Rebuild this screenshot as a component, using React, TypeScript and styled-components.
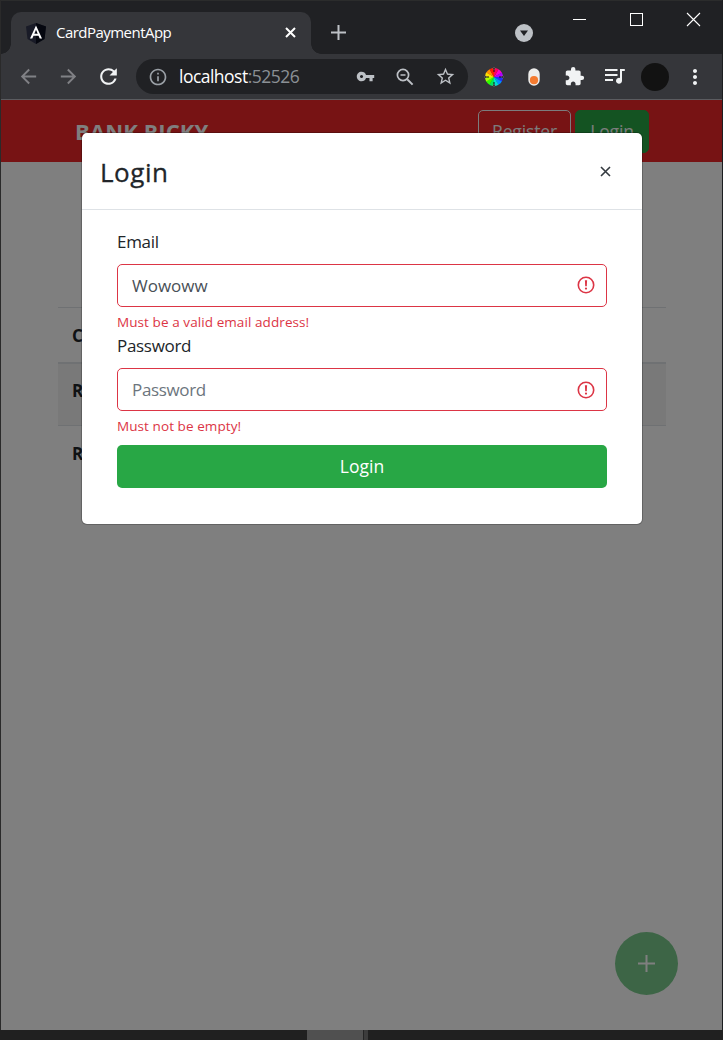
import React from "react";
import styled, { createGlobalStyle, css } from "styled-components";
import {
  MdArrowBack,
  MdArrowForward,
  MdRefresh,
  MdInfoOutline,
  MdVpnKey,
  MdStarBorder,
  MdExtension,
  MdMoreVert,
} from "react-icons/md";

const Global = createGlobalStyle`
  *, *::before, *::after { box-sizing: border-box; }
  body {
    margin: 0;
    background: #1c1c1c;
    color: #212529;
    font-family: "Open Sans", "Noto Sans", sans-serif;
    overflow: hidden;
  }
`;

const Desktop = styled.div`
  width: 723px;
  height: 1040px;
  display: flex;
  flex-direction: column;
  background: linear-gradient(90deg, #2a2a2a 0 50%, #1c1e20 50%);
`;

const Window = styled.div`
  width: 721px;
  height: 1030px;
  margin-left: 1px;
  display: flex;
  flex-direction: column;
`;

const Taskbar = styled.div`
  height: 10px;
  padding-left: 307px;
  display: flex;
  background: #202020;
`;

const TaskbarItem = styled.div<{ $width: number; $color: string }>`
  width: ${(p) => p.$width}px;
  background: ${(p) => p.$color};
`;

/* Browser chrome */

const TabStrip = styled.div`
  height: 54px;
  display: flex;
  align-items: flex-start;
  background: #202124;
  border-top: 1px solid #2b2c2c;
`;

const flare = css`
  content: "";
  position: absolute;
  bottom: 0;
  width: 10px;
  height: 10px;
`;

const Tab = styled.div`
  position: relative;
  width: 300px;
  height: 42px;
  margin: 11px 0 0 10px;
  padding: 0 15px;
  display: flex;
  align-items: center;
  background: #35363a;
  border-radius: 10px 10px 0 0;
  color: #fff;
  font-size: 15px;

  &::before {
    ${flare}
    left: -10px;
    background: radial-gradient(circle at 0 0, transparent 9.5px, #35363a 10px);
  }
  &::after {
    ${flare}
    right: -10px;
    background: radial-gradient(circle at 100% 0, transparent 9.5px, #35363a 10px);
  }
`;

const TabTitle = styled.span`
  flex: 1;
  margin-left: 10px;
  padding-bottom: 2px;
  letter-spacing: -0.53px;
`;

const TabClose = styled.div`
  display: flex;
  padding-bottom: 1px;
`;

const NewTab = styled.div`
  margin: 24px 0 0 20px;
  display: flex;
`;

const WindowControls = styled.div`
  margin-left: auto;
  display: flex;
`;

const TabSearch = styled.div`
  margin: 23px 18px 0 0;
`;

const Control = styled.div<{ $width?: number }>`
  width: ${(p) => p.$width ?? 57}px;
  height: 37px;
  display: flex;
  align-items: center;
  justify-content: center;
`;

const Toolbar = styled.div`
  height: 46px;
  padding: 0 6px 0 7px;
  display: flex;
  align-items: center;
  background: #35363a;
  border-bottom: 1px solid #5b5c60;
`;

const ToolButton = styled.div<{ $color?: string; $width?: number }>`
  width: ${(p) => p.$width ?? 40}px;
  height: 40px;
  display: flex;
  align-items: center;
  justify-content: center;
  color: ${(p) => p.$color ?? "#f1f3f4"};
`;

const AddressBar = styled.div`
  width: 332px;
  height: 35px;
  margin: 0 6px 0 8px;
  padding: 0 3px 0 12px;
  display: flex;
  align-items: center;
  border-radius: 18px;
  background: #202124;
  color: #9aa0a6;
`;

const Url = styled.span`
  flex: 1;
  margin-left: 11px;
  padding-bottom: 1px;
  color: #8b9095;
  font-size: 17.5px;
  letter-spacing: -0.52px;

  b {
    color: #fff;
    font-weight: 400;
  }
`;

const Avatar = styled.div`
  width: 28px;
  height: 28px;
  border-radius: 50%;
  background: #121212;
`;

/* Web page */

const Viewport = styled.div`
  position: relative;
  height: 930px;
  background: #fff;
  overflow: hidden;
`;

const NavBar = styled.header`
  height: 62px;
  padding: 0 73px 0 74px;
  display: flex;
  align-items: center;
  gap: 4px;
  background: #ee2628;
`;

const Brand = styled.div`
  flex: 1;
  color: #fff;
  font-size: 22px;
  font-weight: 700;
  letter-spacing: 0.1px;
`;

const NavButton = styled.div<{ $solid?: boolean }>`
  height: 43px;
  width: ${(p) => (p.$solid ? 74 : 93)}px;
  display: flex;
  align-items: center;
  justify-content: center;
  border: 1px solid ${(p) => (p.$solid ? "#28a745" : "#f8f9fa")};
  border-radius: 5px;
  background: ${(p) => (p.$solid ? "#28a745" : "transparent")};
  color: #f8f9fa;
  font-size: 17.5px;
  letter-spacing: -0.15px;
`;

const CardTable = styled.div`
  width: 608px;
  margin: 145px 0 0 57px;
  font-size: 17px;
  font-weight: 700;
  line-height: 27px;
`;

const TableRow = styled.div<{ $head?: boolean; $striped?: boolean }>`
  height: ${(p) => (p.$head ? 57 : p.$striped ? 61 : 62)}px;
  padding: ${(p) => (p.$striped ? 13 : 14)}px 14px;
  border-top: ${(p) => (p.$striped ? 0 : 1)}px solid #dee2e6;
  border-bottom: ${(p) => (p.$head ? 2 : 0)}px solid #dee2e6;
  background: ${(p) => (p.$striped ? "#f2f2f2" : "transparent")};
`;

const AddButton = styled.div`
  position: absolute;
  right: 44px;
  bottom: 35px;
  width: 63px;
  height: 63px;
  display: flex;
  align-items: center;
  justify-content: center;
  border-radius: 50%;
  background: #7acb8c;
`;

const Backdrop = styled.div`
  position: absolute;
  inset: 0;
  padding: 33px 0 0 81px;
  background: rgba(0, 0, 0, 0.5);
`;

const Modal = styled.section`
  width: 560px;
  height: 391px;
  border-radius: 5px;
  background: #fff;
  box-shadow: 0 0 0 1px rgba(0, 0, 0, 0.22);
`;

const ModalHeader = styled.div`
  height: 77px;
  padding: 0 31px 0 18px;
  display: flex;
  align-items: center;
  justify-content: space-between;
  border-bottom: 1px solid #dee2e6;
`;

const ModalTitle = styled.h4`
  margin: 2px 0 0;
  font-size: 26px;
  font-weight: 500;
  line-height: 36px;
  letter-spacing: 0.55px;
  -webkit-text-stroke: 0.3px #212529;
`;

const Form = styled.div`
  padding: 18px 35px 0;
  display: flex;
  flex-direction: column;
`;

const Label = styled.label`
  height: 27px;
  margin-bottom: 9px;
  font-size: 17px;
  line-height: 27px;
  letter-spacing: -0.3px;
`;

const Field = styled.div<{ $placeholder?: boolean }>`
  height: 43px;
  padding: 0 11px 1px 14px;
  display: flex;
  align-items: center;
  justify-content: space-between;
  border: 1px solid #dc3545;
  border-radius: 5px;
  color: ${(p) => (p.$placeholder ? "#6c757d" : "#495057")};
  font-size: 17px;
  letter-spacing: ${(p) => (p.$placeholder ? -0.35 : 0)}px;

  svg {
    margin-top: ${(p) => (p.$placeholder ? 1 : 0)}px;
  }
`;

const ErrorText = styled.div`
  height: 25px;
  padding-top: 5px;
  color: #dc3545;
  font-size: 13.5px;
  line-height: 21px;
  letter-spacing: 0.08px;
`;

const Submit = styled.div`
  height: 43px;
  margin-top: 9px;
  padding-bottom: 1px;
  display: flex;
  align-items: center;
  justify-content: center;
  border-radius: 5px;
  background: #28a745;
  color: #fff;
  font-size: 17.5px;
`;

const AngularLogo = () => (
  <svg width="20" height="21" viewBox="0 0 20 21">
    <path d="M10 0L20 3.5L18.5 16L10 21L1.5 16L0 3.5Z" fill="#191b27" />
    <path d="M10 0L20 3.5L18.5 16L10 21Z" fill="#05070f" />
    <path d="M10 2.4L4 15.6H6.3L7.5 12.7H12.5L13.7 15.6H16ZM10 6.8L11.7 10.8H8.3Z" fill="#fff" fillRule="evenodd" />
  </svg>
);

const Cross = ({ size, stroke, color }: { size: number; stroke: number; color: string }) => (
  <svg width={size} height={size} viewBox={`0 0 ${size} ${size}`}>
    <path d={`M1 1L${size - 1} ${size - 1}M${size - 1} 1L1 ${size - 1}`} stroke={color} strokeWidth={stroke} />
  </svg>
);

const Plus = ({ size, stroke, color }: { size: number; stroke: number; color: string }) => (
  <svg width={size} height={size} viewBox={`0 0 ${size} ${size}`}>
    <path d={`M${size / 2} 0V${size}M0 ${size / 2}H${size}`} stroke={color} strokeWidth={stroke} />
  </svg>
);

const WHEEL = ["#ff00d0", "#b000ff", "#2030ff", "#0090ff", "#00e0d0", "#00e860", "#30ff00", "#b0ff00", "#ffe000", "#ff9000", "#ff2000", "#ff0060"];

const ColorWheel = () => (
  <svg width="20" height="20" viewBox="-10 -10 20 20">
    {WHEEL.map((color, i) => {
      const a = ((i * 30 - 60) * Math.PI) / 180;
      const b = ((i * 30 - 29) * Math.PI) / 180;
      return (
        <path
          key={color}
          fill={color}
          d={`M0 0L${9 * Math.cos(a)} ${9 * Math.sin(a)}A9 9 0 0 1 ${9 * Math.cos(b)} ${9 * Math.sin(b)}Z`}
        />
      );
    })}
    <path d="M0-9.5V-5M0 9.5V5M-9.5 0H-5M9.5 0H5" stroke="#111" strokeWidth="1" />
    <path
      d="M0-9.8L1-8.6L0-7.4L-1-8.6ZM0 9.8L1 8.6L0 7.4L-1 8.6ZM-9.8 0L-8.6 1L-7.4 0L-8.6-1ZM9.8 0L8.6 1L7.4 0L8.6-1Z"
      fill="#111"
      stroke="#9a9a9a"
      strokeWidth="0.5"
    />
  </svg>
);

const Capsule = () => (
  <svg width="14" height="20" viewBox="0 0 14 20">
    <rect x="1.3" y="1.3" width="11.4" height="17.4" rx="5.7" fill="#eeeeec" />
    <circle cx="7" cy="13.2" r="4.1" fill="#f47b30" />
  </svg>
);

const ZoomOut = () => (
  <svg width="18" height="18" viewBox="0 0 18 18" fill="none" stroke="currentColor">
    <circle cx="7" cy="7" r="5.6" strokeWidth="1.7" />
    <path d="M11.2 11.2L16.6 16.6" strokeWidth="2" />
    <path d="M4.5 7H9.5" strokeWidth="1.5" />
  </svg>
);

const MediaList = () => (
  <svg width="20" height="17" viewBox="0 0 20 17">
    <path d="M0 2H12.5M0 7H12.5M0 12H8" stroke="currentColor" strokeWidth="1.9" />
    <path d="M15 1H19.8V3H17V12.8A3 3 0 1 1 15 10Z" fill="currentColor" />
  </svg>
);

const Warning = () => (
  <svg width="18" height="18" viewBox="0 0 18 18">
    <circle cx="9" cy="9" r="7.7" fill="none" stroke="#dc3545" strokeWidth="1.6" />
    <path d="M7.9 4.3H10.1L9.8 10.2H8.2Z" fill="#dc3545" />
    <circle cx="9" cy="12.6" r="1.1" fill="#dc3545" />
  </svg>
);

export default function App() {
  return (
    <Desktop>
      <Global />
      <Window>
        <TabStrip>
          <Tab>
            <AngularLogo />
            <TabTitle>CardPaymentApp</TabTitle>
            <TabClose>
              <Cross size={11} stroke={2} color="#fff" />
            </TabClose>
          </Tab>
          <NewTab>
            <Plus size={15} stroke={2} color="#bdc1c6" />
          </NewTab>
          <WindowControls>
            <TabSearch>
              <svg width="18" height="18" viewBox="0 0 18 18">
                <circle cx="9" cy="9" r="9" fill="#bdc1c6" />
                <path d="M5 6.5H13L9 12Z" fill="#202124" />
              </svg>
            </TabSearch>
            <Control>
              <svg width="13" height="13" viewBox="0 0 13 13">
                <path d="M0 6.5H13" stroke="#fff" />
              </svg>
            </Control>
            <Control $width={57}>
              <svg width="13" height="13" viewBox="0 0 13 13">
                <rect x="0.5" y="0.5" width="12" height="12" fill="none" stroke="#fff" />
              </svg>
            </Control>
            <Control>
              <Cross size={15} stroke={1.1} color="#fff" />
            </Control>
          </WindowControls>
        </TabStrip>
        <Toolbar>
          <ToolButton $color="#808185"><MdArrowBack size={23} /></ToolButton>
          <ToolButton $color="#808185"><MdArrowForward size={23} /></ToolButton>
          <ToolButton><MdRefresh size={25} /></ToolButton>
          <AddressBar>
            <MdInfoOutline size={20} />
            <Url><b>localhost</b>:52526</Url>
            <ToolButton $color="#bdc1c6"><MdVpnKey size={19} /></ToolButton>
            <ToolButton $color="#bdc1c6"><ZoomOut /></ToolButton>
            <ToolButton $color="#bdc1c6"><MdStarBorder size={21} /></ToolButton>
          </AddressBar>
          <ToolButton><ColorWheel /></ToolButton>
          <ToolButton><Capsule /></ToolButton>
          <ToolButton><MdExtension size={21} /></ToolButton>
          <ToolButton $width={41}><MediaList /></ToolButton>
          <ToolButton><Avatar /></ToolButton>
          <ToolButton><MdMoreVert size={24} /></ToolButton>
        </Toolbar>
        <Viewport>
          <NavBar>
            <Brand>BANK RICKY</Brand>
            <NavButton>Register</NavButton>
            <NavButton $solid>Login</NavButton>
          </NavBar>
          <CardTable>
            <TableRow $head>C</TableRow>
            <TableRow $striped>R</TableRow>
            <TableRow>R</TableRow>
          </CardTable>
          <AddButton>
            <Plus size={17} stroke={2} color="#ffffff" />
          </AddButton>
          <Backdrop>
            <Modal>
              <ModalHeader>
                <ModalTitle>Login</ModalTitle>
                <Cross size={11} stroke={1.6} color="#343a40" />
              </ModalHeader>
              <Form>
                <Label>Email</Label>
                <Field>
                  Wowoww
                  <Warning />
                </Field>
                <ErrorText>Must be a valid email address!</ErrorText>
                <Label>Password</Label>
                <Field $placeholder>
                  Password
                  <Warning />
                </Field>
                <ErrorText>Must not be empty!</ErrorText>
                <Submit>Login</Submit>
              </Form>
            </Modal>
          </Backdrop>
        </Viewport>
      </Window>
      <Taskbar>
        <TaskbarItem $width={56} $color="#505050" />
        <TaskbarItem $width={1} $color="#252525" />
        <TaskbarItem $width={4} $color="#3c3c3c" />
      </Taskbar>
    </Desktop>
  );
}
